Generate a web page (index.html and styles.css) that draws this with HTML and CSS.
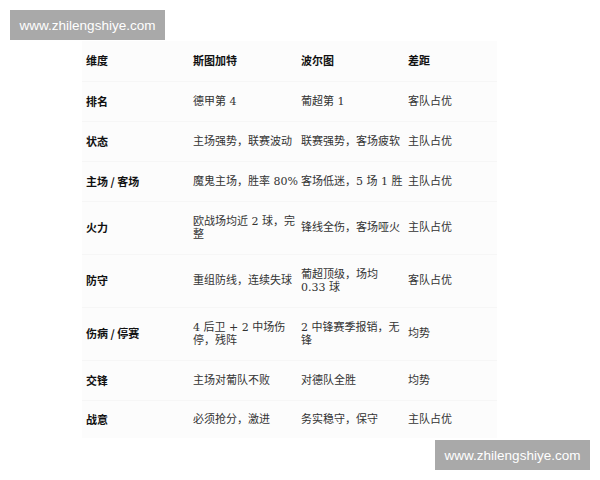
FILE: index.html
```html
<!DOCTYPE html>
<html>
<head>
<meta charset="utf-8">
<link rel="stylesheet" href="styles.css">
</head>
<body>
<div class="page">
  <table class="cmp">
    <colgroup>
      <col class="c1"><col class="c2"><col class="c3"><col class="c4">
    </colgroup>
    <thead>
      <tr><th>维度</th><th>斯图加特</th><th>波尔图</th><th>差距</th></tr>
    </thead>
    <tbody>
      <tr><th>排名</th><td>德甲第 4</td><td>葡超第 1</td><td>客队占优</td></tr>
      <tr><th>状态</th><td>主场强势，联赛波动</td><td>联赛强势，客场疲软</td><td>主队占优</td></tr>
      <tr><th>主场 / 客场</th><td>魔鬼主场，胜率 80%</td><td>客场低迷，5 场 1 胜</td><td>主队占优</td></tr>
      <tr class="tall"><th>火力</th><td>欧战场均近 2 球，完<br>整</td><td>锋线全伤，客场哑火</td><td>主队占优</td></tr>
      <tr class="tall"><th>防守</th><td>重组防线，连续失球</td><td>葡超顶级，场均<br>0.33 球</td><td>客队占优</td></tr>
      <tr class="tall"><th>伤病 / 停赛</th><td>4 后卫 + 2 中场伤<br>停，残阵</td><td>2 中锋赛季报销，无<br>锋</td><td>均势</td></tr>
      <tr><th>交锋</th><td>主场对葡队不败</td><td>对德队全胜</td><td>均势</td></tr>
      <tr class="last"><th>战意</th><td>必须抢分，激进</td><td>务实稳守，保守</td><td>主队占优</td></tr>
    </tbody>
  </table>
  <div class="mark mark-top">www.zhilengshiye.com</div>
  <div class="mark mark-bottom">www.zhilengshiye.com</div>
</div>
</body>
</html>
```
FILE: styles.css
```css
html, body {
  margin: 0;
  padding: 0;
  background: #ffffff;
}
.page {
  position: relative;
  width: 600px;
  height: 480px;
  overflow: hidden;
  padding: 41px 0 0 82px;
  box-sizing: border-box;
}
.cmp {
  border-collapse: collapse;
  table-layout: fixed;
  width: 415px;
  background: #fcfcfc;
  font-family: "DejaVu Serif", "Noto Sans CJK SC", serif;
  font-size: 11px;
  line-height: 13px;
}
.c1 { width: 107px; }
.c2 { width: 108px; }
.c3 { width: 107px; }
.c4 { width: 93px; }
.cmp th, .cmp td {
  text-align: left;
  vertical-align: middle;
  padding: 0 0 0 4px;
  height: 40px;
  box-sizing: border-box;
  white-space: nowrap;
  border-bottom: 1px solid #f6f6f6;
}
.cmp tr.tall th, .cmp tr.tall td {
  height: 53px;
}
.cmp tr.last th, .cmp tr.last td {
  height: 38px;
  border-bottom: none;
}
.cmp th {
  font-family: "Noto Sans CJK SC", sans-serif;
  font-weight: bold;
  color: #111111;
}
.cmp td {
  color: #333333;
}
.mark {
  position: absolute;
  width: 155px;
  height: 30px;
  background: #a9a9a9;
  color: #ffffff;
  font-family: "Liberation Sans", sans-serif;
  font-size: 13.5px;
  display: flex;
  align-items: center;
  justify-content: center;
}
.mark-top { left: 10px; top: 10px; }
.mark-bottom { left: 435px; top: 440px; }
```
